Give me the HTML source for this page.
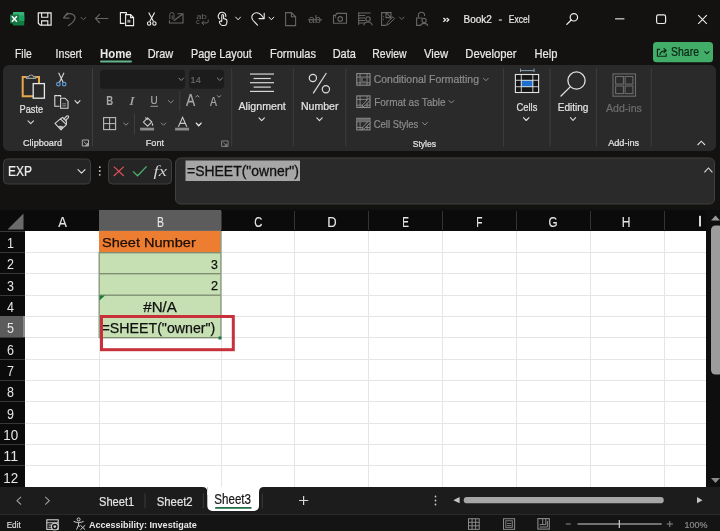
<!DOCTYPE html>
<html><head><meta charset="utf-8">
<style>
*{margin:0;padding:0}
html,body{width:720px;height:531px;overflow:hidden;background:#131210}
svg{display:block;font-family:"Liberation Sans",sans-serif}
svg{will-change:transform}
</style></head><body>
<svg width="720" height="531" viewBox="0 0 720 531">
<rect x="0" y="0" width="720" height="531" fill="#131210" />
<rect x="3" y="65" width="713" height="86" fill="#2a2a2a" rx="6" />
<rect x="3.5" y="159" width="87" height="25" fill="#252525" rx="4" stroke="#3e3e3e" stroke-width="1" />
<rect x="108.5" y="159" width="63" height="25" fill="#252525" rx="4" stroke="#3e3e3e" stroke-width="1" />
<rect x="175.5" y="158" width="539" height="46" fill="#2a2a2a" rx="5" stroke="#404040" stroke-width="1" />
<rect x="0" y="210" width="720" height="21" fill="#0b0b0b" />
<rect x="25" y="231" width="681" height="256" fill="#ffffff" />
<rect x="25" y="252" width="681" height="1" fill="#e5e5e5" />
<rect x="25" y="273" width="681" height="1" fill="#e5e5e5" />
<rect x="25" y="295" width="681" height="1" fill="#e5e5e5" />
<rect x="25" y="316" width="681" height="1" fill="#e5e5e5" />
<rect x="25" y="337" width="681" height="1" fill="#e5e5e5" />
<rect x="25" y="359" width="681" height="1" fill="#e5e5e5" />
<rect x="25" y="380" width="681" height="1" fill="#e5e5e5" />
<rect x="25" y="401" width="681" height="1" fill="#e5e5e5" />
<rect x="25" y="423" width="681" height="1" fill="#e5e5e5" />
<rect x="25" y="444" width="681" height="1" fill="#e5e5e5" />
<rect x="25" y="465" width="681" height="1" fill="#e5e5e5" />
<rect x="99" y="231" width="1" height="256" fill="#e5e5e5" />
<rect x="221" y="231" width="1" height="256" fill="#e5e5e5" />
<rect x="294" y="231" width="1" height="256" fill="#e5e5e5" />
<rect x="368" y="231" width="1" height="256" fill="#e5e5e5" />
<rect x="442" y="231" width="1" height="256" fill="#e5e5e5" />
<rect x="516" y="231" width="1" height="256" fill="#e5e5e5" />
<rect x="590" y="231" width="1" height="256" fill="#e5e5e5" />
<rect x="664" y="231" width="1" height="256" fill="#e5e5e5" />
<rect x="0" y="231" width="25" height="256" fill="#0b0b0b" />
<rect x="706" y="210" width="14" height="277" fill="#0e0e0e" />
<rect x="0" y="487" width="720" height="28" fill="#1c1c1c" />
<rect x="0" y="514" width="720" height="1" fill="#2a2a2a" />
<rect x="0" y="515" width="720" height="16" fill="#141414" />
<text x="15.00" y="57.60" font-size="12.35" textLength="16.71" lengthAdjust="spacingAndGlyphs" fill="#e8e8e8" stroke="#e8e8e8" stroke-width="0.22" >File</text>
<text x="55.60" y="57.60" font-size="12.35" textLength="26.41" lengthAdjust="spacingAndGlyphs" fill="#e8e8e8" stroke="#e8e8e8" stroke-width="0.22" >Insert</text>
<text x="100.00" y="57.60" font-size="12.35" textLength="31.68" lengthAdjust="spacingAndGlyphs" fill="#e8e8e8" font-weight="bold" >Home</text>
<rect x="100" y="60.5" width="32" height="2" fill="#62b58c" rx="1" />
<text x="147.70" y="57.60" font-size="12.35" textLength="25.53" lengthAdjust="spacingAndGlyphs" fill="#e8e8e8" stroke="#e8e8e8" stroke-width="0.22" >Draw</text>
<text x="191.00" y="57.60" font-size="12.35" textLength="60.65" lengthAdjust="spacingAndGlyphs" fill="#e8e8e8" stroke="#e8e8e8" stroke-width="0.22" >Page Layout</text>
<text x="270.00" y="57.60" font-size="12.35" textLength="45.97" lengthAdjust="spacingAndGlyphs" fill="#e8e8e8" stroke="#e8e8e8" stroke-width="0.22" >Formulas</text>
<text x="332.70" y="57.60" font-size="12.35" textLength="23.21" lengthAdjust="spacingAndGlyphs" fill="#e8e8e8" stroke="#e8e8e8" stroke-width="0.22" >Data</text>
<text x="372.30" y="57.60" font-size="12.35" textLength="34.28" lengthAdjust="spacingAndGlyphs" fill="#e8e8e8" stroke="#e8e8e8" stroke-width="0.22" >Review</text>
<text x="424.00" y="57.60" font-size="12.35" textLength="24.18" lengthAdjust="spacingAndGlyphs" fill="#e8e8e8" stroke="#e8e8e8" stroke-width="0.22" >View</text>
<text x="465.30" y="57.60" font-size="12.35" textLength="51.28" lengthAdjust="spacingAndGlyphs" fill="#e8e8e8" stroke="#e8e8e8" stroke-width="0.22" >Developer</text>
<text x="534.50" y="57.60" font-size="12.35" textLength="22.96" lengthAdjust="spacingAndGlyphs" fill="#e8e8e8" stroke="#e8e8e8" stroke-width="0.22" >Help</text>
<rect x="653" y="42.1" width="60" height="20.2" fill="#42ad68" rx="3.5" />
<text x="671.10" y="56.40" font-size="11.92" textLength="27.88" lengthAdjust="spacingAndGlyphs" fill="#0b2614" stroke="#0b2614" stroke-width="0.22" >Share</text>
<path d="M660.2 49.4 H657.4 V56.2 H666.2 V53.4" fill="none" stroke="#0b2614" stroke-width="1.1" />
<path d="M659.8 55 Q660.6 50.8 665.4 50.6 M663.6 48.2 L666.2 50.6 L663.6 53" fill="none" stroke="#0b2614" stroke-width="1.1" />
<path d="M704.80 51.55 L706.90 53.65 L709.00 51.55" fill="none" stroke="#0b2614" stroke-width="1.1" stroke-linecap="round" stroke-linejoin="round"/>
<text x="463.50" y="23.10" font-size="10.90" textLength="28.45" lengthAdjust="spacingAndGlyphs" fill="#e8e8e8" stroke="#e8e8e8" stroke-width="0.22" >Book2</text>
<rect x="498.8" y="19.5" width="3.1" height="1.1" fill="#e8e8e8" />
<text x="508.75" y="23.10" font-size="10.90" textLength="20.81" lengthAdjust="spacingAndGlyphs" fill="#e8e8e8" stroke="#e8e8e8" stroke-width="0.22" >Excel</text>
<text x="19.60" y="112.70" font-size="10.61" textLength="23.47" lengthAdjust="spacingAndGlyphs" fill="#e4e4e4" stroke="#e4e4e4" stroke-width="0.22" >Paste</text>
<text x="23.00" y="145.90" font-size="9.16" textLength="39.00" lengthAdjust="spacingAndGlyphs" fill="#e4e4e4" stroke="#e4e4e4" stroke-width="0.22" >Clipboard</text>
<text x="145.80" y="145.90" font-size="9.45" textLength="18.21" lengthAdjust="spacingAndGlyphs" fill="#e4e4e4" stroke="#e4e4e4" stroke-width="0.22" >Font</text>
<text x="238.50" y="110.00" font-size="11.19" textLength="47.26" lengthAdjust="spacingAndGlyphs" fill="#e4e4e4" stroke="#e4e4e4" stroke-width="0.22" >Alignment</text>
<text x="301.00" y="110.00" font-size="11.19" textLength="37.46" lengthAdjust="spacingAndGlyphs" fill="#e4e4e4" stroke="#e4e4e4" stroke-width="0.22" >Number</text>
<text x="373.75" y="83.30" font-size="11.19" textLength="105.25" lengthAdjust="spacingAndGlyphs" fill="#8c8c8c" stroke="#8c8c8c" stroke-width="0.22" >Conditional Formatting</text>
<text x="374.20" y="105.80" font-size="11.19" textLength="71.41" lengthAdjust="spacingAndGlyphs" fill="#8c8c8c" stroke="#8c8c8c" stroke-width="0.22" >Format as Table</text>
<text x="373.75" y="128.30" font-size="11.48" textLength="44.58" lengthAdjust="spacingAndGlyphs" fill="#8c8c8c" stroke="#8c8c8c" stroke-width="0.22" >Cell Styles</text>
<text x="412.70" y="147.00" font-size="9.88" textLength="23.33" lengthAdjust="spacingAndGlyphs" fill="#e4e4e4" stroke="#e4e4e4" stroke-width="0.22" >Styles</text>
<text x="516.50" y="110.50" font-size="11.63" textLength="20.82" lengthAdjust="spacingAndGlyphs" fill="#e4e4e4" stroke="#e4e4e4" stroke-width="0.22" >Cells</text>
<text x="557.70" y="110.50" font-size="11.63" textLength="30.67" lengthAdjust="spacingAndGlyphs" fill="#e4e4e4" stroke="#e4e4e4" stroke-width="0.22" >Editing</text>
<text x="606.00" y="111.75" font-size="11.56" textLength="35.80" lengthAdjust="spacingAndGlyphs" fill="#6e6e6e" stroke="#6e6e6e" stroke-width="0.22" >Add-ins</text>
<text x="608.20" y="146.30" font-size="9.30" textLength="31.00" lengthAdjust="spacingAndGlyphs" fill="#e4e4e4" stroke="#e4e4e4" stroke-width="0.22" >Add-ins</text>
<text x="8.00" y="176.00" font-size="13.95" textLength="24.01" lengthAdjust="spacingAndGlyphs" fill="#ececec" stroke="#ececec" stroke-width="0.22" >EXP</text>
<rect x="185.5" y="160.5" width="114.5" height="20.5" fill="#a6a6a6" />
<text x="187.00" y="176.20" font-size="14.83" textLength="111.97" lengthAdjust="spacingAndGlyphs" fill="#111111" stroke="#111111" stroke-width="0.3" >=SHEET(&quot;owner&quot;)</text>
<rect x="99" y="211" width="1" height="19" fill="#333333" />
<rect x="221" y="211" width="1" height="19" fill="#333333" />
<rect x="294" y="211" width="1" height="19" fill="#333333" />
<rect x="368" y="211" width="1" height="19" fill="#333333" />
<rect x="442" y="211" width="1" height="19" fill="#333333" />
<rect x="516" y="211" width="1" height="19" fill="#333333" />
<rect x="590" y="211" width="1" height="19" fill="#333333" />
<rect x="664" y="211" width="1" height="19" fill="#333333" />
<rect x="99" y="210" width="122" height="21" fill="#5c5c5c" />
<rect x="99" y="230" width="122" height="1" fill="#6a6a6a" />
<rect x="0" y="231" width="25" height="1" fill="#383838" />
<rect x="0" y="252" width="25" height="1" fill="#383838" />
<rect x="0" y="273" width="25" height="1" fill="#383838" />
<rect x="0" y="295" width="25" height="1" fill="#383838" />
<rect x="0" y="316" width="25" height="1" fill="#383838" />
<rect x="0" y="337" width="25" height="1" fill="#383838" />
<rect x="0" y="359" width="25" height="1" fill="#383838" />
<rect x="0" y="380" width="25" height="1" fill="#383838" />
<rect x="0" y="401" width="25" height="1" fill="#383838" />
<rect x="0" y="423" width="25" height="1" fill="#383838" />
<rect x="0" y="444" width="25" height="1" fill="#383838" />
<rect x="0" y="465" width="25" height="1" fill="#383838" />
<rect x="0" y="316" width="25" height="21" fill="#5c5c5c" />
<rect x="23" y="316" width="2" height="21" fill="#8a8a8a" />
<path d="M7.5 229.5 L23.5 229.5 L23.5 213.5 Z" fill="#6a6a6a" stroke="none" stroke-width="1" />
<text x="58.30" y="226.50" font-size="14.53" textLength="8.66" lengthAdjust="spacingAndGlyphs" fill="#e6e6e6" stroke="#e6e6e6" stroke-width="0.1" >A</text>
<text x="157.00" y="226.50" font-size="14.53" textLength="6.97" lengthAdjust="spacingAndGlyphs" fill="#e6e6e6" stroke="#e6e6e6" stroke-width="0.1" >B</text>
<text x="254.30" y="226.50" font-size="14.53" textLength="8.02" lengthAdjust="spacingAndGlyphs" fill="#e6e6e6" stroke="#e6e6e6" stroke-width="0.1" >C</text>
<text x="327.30" y="226.50" font-size="14.53" textLength="9.43" lengthAdjust="spacingAndGlyphs" fill="#e6e6e6" stroke="#e6e6e6" stroke-width="0.1" >D</text>
<text x="402.30" y="226.50" font-size="14.53" textLength="6.67" lengthAdjust="spacingAndGlyphs" fill="#e6e6e6" stroke="#e6e6e6" stroke-width="0.1" >E</text>
<text x="476.20" y="226.50" font-size="14.53" textLength="6.21" lengthAdjust="spacingAndGlyphs" fill="#e6e6e6" stroke="#e6e6e6" stroke-width="0.1" >F</text>
<text x="548.40" y="226.50" font-size="14.53" textLength="9.07" lengthAdjust="spacingAndGlyphs" fill="#e6e6e6" stroke="#e6e6e6" stroke-width="0.1" >G</text>
<text x="621.70" y="226.50" font-size="14.53" textLength="8.73" lengthAdjust="spacingAndGlyphs" fill="#e6e6e6" stroke="#e6e6e6" stroke-width="0.1" >H</text>
<rect x="699" y="215.8" width="2" height="10.7" fill="#d8d8d8" />
<text x="7.10" y="247.87" font-size="14.95" textLength="6.95" lengthAdjust="spacingAndGlyphs" fill="#e6e6e6" >1</text>
<text x="7.10" y="269.20" font-size="14.95" textLength="6.95" lengthAdjust="spacingAndGlyphs" fill="#e6e6e6" >2</text>
<text x="7.10" y="290.53" font-size="14.95" textLength="6.95" lengthAdjust="spacingAndGlyphs" fill="#e6e6e6" >3</text>
<text x="7.10" y="311.87" font-size="14.95" textLength="6.95" lengthAdjust="spacingAndGlyphs" fill="#e6e6e6" >4</text>
<text x="7.10" y="333.20" font-size="14.95" textLength="6.95" lengthAdjust="spacingAndGlyphs" fill="#e6e6e6" >5</text>
<text x="7.10" y="354.53" font-size="14.95" textLength="6.95" lengthAdjust="spacingAndGlyphs" fill="#e6e6e6" >6</text>
<text x="7.10" y="375.87" font-size="14.95" textLength="6.95" lengthAdjust="spacingAndGlyphs" fill="#e6e6e6" >7</text>
<text x="7.10" y="397.20" font-size="14.95" textLength="6.95" lengthAdjust="spacingAndGlyphs" fill="#e6e6e6" >8</text>
<text x="7.10" y="418.53" font-size="14.95" textLength="6.95" lengthAdjust="spacingAndGlyphs" fill="#e6e6e6" >9</text>
<text x="3.30" y="439.87" font-size="14.95" textLength="14.93" lengthAdjust="spacingAndGlyphs" fill="#e6e6e6" >10</text>
<text x="3.30" y="461.20" font-size="14.95" textLength="14.87" lengthAdjust="spacingAndGlyphs" fill="#e6e6e6" >11</text>
<text x="3.30" y="482.53" font-size="14.95" textLength="14.93" lengthAdjust="spacingAndGlyphs" fill="#e6e6e6" >12</text>
<rect x="99" y="231" width="122" height="21" fill="#ed7d31" />
<rect x="99" y="252" width="122" height="86" fill="#c6e0b4" />
<rect x="99" y="252" width="122" height="1.4" fill="#7f8f74" />
<rect x="99" y="273" width="122" height="1.4" fill="#7f8f74" />
<rect x="99" y="294.5" width="122" height="1.4" fill="#7f8f74" />
<rect x="99" y="316" width="122" height="1.4" fill="#7f8f74" />
<rect x="99" y="337" width="122" height="1.4" fill="#7f8f74" />
<rect x="98.5" y="252" width="1.4" height="86" fill="#8a9a80" />
<rect x="220.2" y="231" width="1.4" height="107" fill="#8e9c84" />
<text x="102.00" y="246.90" font-size="13.66" textLength="93.76" lengthAdjust="spacingAndGlyphs" fill="#1c0f06" stroke="#1c0f06" stroke-width="0.25" >Sheet Number</text>
<text x="210.90" y="268.90" font-size="13.40" textLength="6.85" lengthAdjust="spacingAndGlyphs" fill="#111" stroke="#111" stroke-width="0.25" >3</text>
<text x="210.90" y="290.00" font-size="13.26" textLength="7.05" lengthAdjust="spacingAndGlyphs" fill="#111" stroke="#111" stroke-width="0.25" >2</text>
<text x="143.30" y="311.50" font-size="14.53" textLength="33.60" lengthAdjust="spacingAndGlyphs" fill="#111" stroke="#111" stroke-width="0.25" >#N/A</text>
<text x="101.50" y="332.80" font-size="13.81" textLength="113.86" lengthAdjust="spacingAndGlyphs" fill="#111" stroke="#111" stroke-width="0.25" >=SHEET(&quot;owner&quot;)</text>
<path d="M99.5 295.5 L105 295.5 L99.5 300.5 Z" fill="#1f7a3c" stroke="none" stroke-width="1" />
<rect x="218.5" y="336.5" width="3" height="3" fill="#217346" />
<rect x="101.5" y="316.5" width="131.8" height="33.2" fill="none" stroke="#c8303a" stroke-width="3" />
<path d="M711 220.5 L715.5 215.5 L720 220.5 Z" fill="#9a9a9a" stroke="none" stroke-width="1" />
<rect x="711" y="225.5" width="12" height="149" fill="#9c9c9c" rx="4.5" />
<path d="M711 478 L715.5 483 L720 478 Z" fill="#8a8a8a" stroke="none" stroke-width="1" />
<path d="M21.1 496.8 L17 500.7 L21.1 504.6" fill="none" stroke="#a0a0a0" stroke-width="1.1" />
<path d="M45.2 496.8 L49.3 500.7 L45.2 504.6" fill="none" stroke="#a0a0a0" stroke-width="1.1" />
<text x="99.00" y="506.00" font-size="13.52" textLength="35.29" lengthAdjust="spacingAndGlyphs" fill="#e4e4e4" stroke="#e4e4e4" stroke-width="0.22" >Sheet1</text>
<text x="156.70" y="506.00" font-size="13.52" textLength="35.99" lengthAdjust="spacingAndGlyphs" fill="#e4e4e4" stroke="#e4e4e4" stroke-width="0.22" >Sheet2</text>
<rect x="144.5" y="493.3" width="1" height="15" fill="#3a3a3a" />
<rect x="202.8" y="493.3" width="1" height="15" fill="#3a3a3a" />
<rect x="261.8" y="493.3" width="1" height="15" fill="#3a3a3a" />
<rect x="207.3" y="487" width="51.7" height="24" fill="#ffffff" rx="5" />
<rect x="207.3" y="487" width="51.7" height="8" fill="#ffffff" />
<path d="M202.3 487 H207.3 V492 Q207.3 487 202.3 487 Z" fill="#ffffff" stroke="none" stroke-width="1" />
<path d="M264 487 H259 V492 Q259 487 264 487 Z" fill="#ffffff" stroke="none" stroke-width="1" />
<text x="214.30" y="504.00" font-size="14.10" textLength="36.69" lengthAdjust="spacingAndGlyphs" fill="#161616" stroke="#161616" stroke-width="0.22" >Sheet3</text>
<rect x="215" y="507" width="36.7" height="1.8" fill="#1f6e43" rx="0.9" />
<path d="M303.6 496 V505 M299 500.5 H308.3" fill="none" stroke="#d8d8d8" stroke-width="1.2" />
<rect x="434.6" y="495.6" width="1.8" height="1.8" fill="#c8c8c8" rx="0.9" />
<rect x="434.6" y="499.6" width="1.8" height="1.8" fill="#c8c8c8" rx="0.9" />
<rect x="434.6" y="503.6" width="1.8" height="1.8" fill="#c8c8c8" rx="0.9" />
<path d="M459.6 497 L453.3 500.2 L459.6 503.3 Z" fill="#c4c4c4" stroke="none" stroke-width="1" />
<rect x="463.75" y="497" width="200" height="6.3" fill="#a6a6a6" rx="3.15" />
<path d="M697 497 L702.5 500.2 L697 503.3 Z" fill="#c4c4c4" stroke="none" stroke-width="1" />
<text x="6.70" y="528.00" font-size="9.74" textLength="14.04" lengthAdjust="spacingAndGlyphs" fill="#d8d8d8" stroke="#d8d8d8" stroke-width="0.22" >Edit</text>
<text x="89.00" y="527.70" font-size="9.74" textLength="107.68" lengthAdjust="spacingAndGlyphs" fill="#e8e8e8" font-weight="bold" >Accessibility: Investigate</text>
<text x="684.60" y="527.50" font-size="9.45" textLength="22.88" lengthAdjust="spacingAndGlyphs" fill="#8a8a8a" stroke="#8a8a8a" stroke-width="0.22" >100%</text>
<rect x="577.5" y="523.5" width="84.2" height="1" fill="#d0d0d0" />
<rect x="618.7" y="520" width="1.2" height="8" fill="#d0d0d0" />
<rect x="565.8" y="523.5" width="5" height="1" fill="#8a8a8a" />
<path d="M669.8 521 V527 M666.7 524 H672.9" fill="none" stroke="#8a8a8a" stroke-width="1" />
<rect x="12.9" y="11.9" width="11.4" height="4.6" fill="#35b577" rx="1" />
<rect x="12.9" y="15.5" width="11.4" height="5.5" fill="#21a366" />
<rect x="12.9" y="20.5" width="11.4" height="5.1" fill="#107c41" rx="1" />
<rect x="12.9" y="16.2" width="11.4" height="4.6" fill="#21a366" />
<rect x="10" y="14.6" width="9.1" height="8.8" fill="#1a7543" rx="1" />
<path d="M11.9 16.3 L16.9 21.7 M16.9 16.3 L11.9 21.7" fill="none" stroke="#ffffff" stroke-width="1.5" />
<path d="M38.3 12.8 H51.1 V25.2 H40.3 L38.3 23.2 Z" fill="none" stroke="#ececec" stroke-width="1.2" />
<path d="M41.6 12.8 V17.2 H47.8 V12.8" fill="none" stroke="#ececec" stroke-width="1.1" />
<path d="M41.6 25.2 V20.9 H47.8 V25.2" fill="none" stroke="#ececec" stroke-width="1.1" />
<path d="M63.5 17.8 L67.3 13 M63.5 17.8 L69 18.2 M63.8 17.6 C66 14.2 69.5 12.8 72.5 14.2 C76.5 16.3 76 21 68.5 25.6" fill="none" stroke="#666666" stroke-width="1.2" stroke-linecap="round"/>
<path d="M81.00 17.35 L83.40 19.75 L85.80 17.35" fill="none" stroke="#666666" stroke-width="1" stroke-linecap="round" stroke-linejoin="round"/>
<path d="M95.5 18.5 H108.3 M99.8 14.1 L95.5 18.5 L99.8 23" fill="none" stroke="#666666" stroke-width="1.1" />
<path d="M124.6 23.4 H120.4 V12.6 H126.4 V14.4" fill="none" stroke="#ececec" stroke-width="1.1" />
<path d="M125.6 14.6 H130.6 L133.6 17.6 V25.6 H125.6 Z M130.6 14.6 V17.6 H133.6" fill="none" stroke="#ececec" stroke-width="1.1" />
<rect x="127.4" y="19.8" width="3" height="2.8" fill="#a0a0a0" />
<path d="M148.7 12.5 L153.5 21.6 M154.6 12.5 L149.8 21.6" fill="none" stroke="#ececec" stroke-width="1.1" />
<circle cx="149.1" cy="23.5" r="1.7" fill="none" stroke="#ececec" stroke-width="1.1"/>
<circle cx="154.4" cy="23.5" r="1.7" fill="none" stroke="#ececec" stroke-width="1.1"/>
<path d="M169.8 19.2 V14.6 A2.1 2.1 0 0 1 174 14.6 V18.4 A0.9 0.9 0 0 1 172.2 18.4 V15.4" fill="none" stroke="#666666" stroke-width="0.9" />
<path d="M169.4 20.3 V23 H183 V13.8 H177.5 M183 13.8 L173.8 20.8" fill="none" stroke="#666666" stroke-width="1.1" />
<text x="196.2" y="18.6" font-size="7.5" fill="#666666" textLength="10.6" lengthAdjust="spacingAndGlyphs">ab</text>
<text x="196" y="24.3" font-size="7.5" fill="#666666">c</text>
<path d="M208.2 19.6 V21.6 Q208.2 22.9 206.8 22.9 H201.8 M203.9 20.9 L201.8 22.9 L203.9 24.9" fill="none" stroke="#666666" stroke-width="1" />
<path d="M219.9 19.2 A3.75 3.75 0 1 1 225.7 16.8" fill="none" stroke="#ececec" stroke-width="1.1" />
<path d="M221.8 21.2 V15.6 Q221.8 14.5 222.7 14.5 Q223.6 14.5 223.6 15.6 V18.6 L225.6 19.1 Q227.2 19.5 227 21.2 L226.7 23.4 Q226.3 25.5 224.3 25.5 H222.6 Q221.3 25.5 220.5 24.3 L219.5 22.7 Q219.1 21.7 219.9 21.3 Q220.8 20.9 221.8 21.8" fill="none" stroke="#ececec" stroke-width="1.1" />
<path d="M235.70 17.15 L238.10 19.75 L240.50 17.15" fill="none" stroke="#ececec" stroke-width="1" stroke-linecap="round" stroke-linejoin="round"/>
<path d="M257.5 25.2 L253.2 20.5 Q250.8 17.6 252.6 14.8 Q255 11.8 258.8 13.2 Q261.5 14.3 263.8 18.2" fill="none" stroke="#ececec" stroke-width="1.1" stroke-linecap="round"/>
<path d="M264.2 13.4 V18.6 H259" fill="none" stroke="#ececec" stroke-width="1.1" stroke-linecap="round" stroke-linejoin="round"/>
<path d="M269.00 17.15 L271.40 19.75 L273.80 17.15" fill="none" stroke="#ececec" stroke-width="1" stroke-linecap="round" stroke-linejoin="round"/>
<path d="M285.6 12.6 H291.4 L295.6 16.8 V25.6 H285.6 Z M291.4 12.6 V16.8 H295.6" fill="none" stroke="#666666" stroke-width="1.1" />
<text x="308.6" y="23" font-size="10.5" fill="#666666" textLength="12.4" lengthAdjust="spacingAndGlyphs">ab</text>
<rect x="307.9" y="19.3" width="14.2" height="1" fill="#666666" />
<path d="M333.5 15.4 H335.5 L336.8 13.4 H346.5 V23.2 H333.5 Z" fill="none" stroke="#666666" stroke-width="1.1" />
<circle cx="340.2" cy="18.9" r="2.3" fill="none" stroke="#666666" stroke-width="1.1"/>
<rect x="334.8" y="16.4" width="1.2" height="1.2" fill="#666666" />
<rect x="358.2" y="12.5" width="12.5" height="1" fill="#666666" />
<rect x="358.2" y="15.0" width="7" height="1" fill="#666666" />
<rect x="358.2" y="17.5" width="7" height="1" fill="#666666" />
<rect x="358.2" y="20.0" width="7" height="1" fill="#666666" />
<rect x="358.2" y="22.5" width="7" height="1" fill="#666666" />
<rect x="358.2" y="12.5" width="1" height="12.5" fill="#666666" />
<circle cx="368" cy="19" r="2.2" fill="#131210" stroke="#666666" stroke-width="1.1"/>
<path d="M363.8 25.4 Q364.4 22 368 22 Q371.6 22 372.2 25.4" fill="#131210" stroke="#666666" stroke-width="1.1" />
<path d="M391 20.8 V12.6 H386 L391 17.6 M386 12.6 V17.6 H391 M386 12.6 H381.6 V25.4 H386" fill="none" stroke="#666666" stroke-width="1.1" />
<path d="M386.6 25.2 L387.4 22.4 L393 16.8 L394.6 18.4 L389 24 Z" fill="#131210" stroke="#666666" stroke-width="1" />
<path d="M382.8 16 L384 17.2 M382.8 19 L384 20.2" fill="none" stroke="#666666" stroke-width="0.9" />
<path d="M399.50 17.05 L401.80 19.45 L404.10 17.05" fill="none" stroke="#666666" stroke-width="1" stroke-linecap="round" stroke-linejoin="round"/>
<path d="M418.4 17.6 V15.4 A3.1 3.1 0 0 1 424.6 15.4 V16" fill="none" stroke="#666666" stroke-width="1.1" />
<path d="M420 25.4 H416.6 V18 H422.4" fill="none" stroke="#666666" stroke-width="1.1" />
<circle cx="424.1" cy="20.4" r="2.1" fill="#131210" stroke="#666666" stroke-width="1.1"/>
<path d="M420.4 25.8 Q421 23.4 424.1 23.4 Q427.2 23.4 427.8 25.8" fill="none" stroke="#666666" stroke-width="1.1" />
<path d="M443.4 17.9 L445.6 19.8 L443.4 21.7 M446.6 17.9 L448.8 19.8 L446.6 21.7" fill="none" stroke="#ececec" stroke-width="1.3" stroke-linejoin="round"/>
<circle cx="573.9" cy="17.3" r="3.7" fill="none" stroke="#ececec" stroke-width="1.2"/>
<path d="M571.2 20 L566.8 24.4" fill="none" stroke="#ececec" stroke-width="1.3" stroke-linecap="round"/>
<rect x="615.1" y="18.3" width="9.3" height="1.1" fill="#ececec" />
<rect x="656.6" y="14.9" width="9" height="8.6" fill="none" rx="1.8" stroke="#ececec" stroke-width="1.2" />
<path d="M698.2 15.2 L706.8 23.8 M706.8 15.2 L698.2 23.8" fill="none" stroke="#ececec" stroke-width="1.1" />
<path d="M22.7 76.9 H39 V96.2 H22.7 Z" fill="none" stroke="#e5a94c" stroke-width="2" />
<path d="M26.5 78.3 V76.6 H28.7 A2.6 2.6 0 0 1 33.5 76.6 H35.6 V78.3 Z" fill="#2a2a2a" stroke="#a0a0a0" stroke-width="1.2" />
<rect x="33.2" y="83.6" width="11.2" height="14.6" fill="#2a2a2a" stroke="#e8e8e8" stroke-width="1.3" />
<path d="M58.6 72.8 L63.2 82.4 M64 72.8 L59.4 82.4" fill="none" stroke="#d8d8d8" stroke-width="1.1" />
<circle cx="58.4" cy="84.2" r="1.75" fill="none" stroke="#5b9bd5" stroke-width="1.2"/>
<circle cx="64.2" cy="84.2" r="1.75" fill="none" stroke="#5b9bd5" stroke-width="1.2"/>
<path d="M59.6 106.2 H54.8 V95.6 H60.6 V97" fill="none" stroke="#d8d8d8" stroke-width="1.1" />
<path d="M60.6 98.2 H65 L68 101.2 V108.2 H60.6 Z" fill="none" stroke="#d8d8d8" stroke-width="1.1" />
<rect x="62.3" y="103.4" width="3.8" height="0.9" fill="#9a9a9a" />
<rect x="62.3" y="105.4" width="3.8" height="0.9" fill="#9a9a9a" />
<path d="M75.00 100.55 L77.50 103.45 L80.00 100.55" fill="none" stroke="#d8d8d8" stroke-width="1.1" stroke-linecap="round" stroke-linejoin="round"/>
<path d="M55 123.4 L60.4 118.8 L66.4 124.6 L61 129.8 Z" fill="none" stroke="#d4d4d4" stroke-width="1.1" stroke-linejoin="round"/>
<path d="M57.6 126.2 L61 129.8 L64 126.8 Q60.5 125 57.6 126.2 Z" fill="#bdbdbd" stroke="none" stroke-width="1" />
<path d="M60.4 118.8 L62.8 117.4 L66.4 121 L66.4 124.6" fill="none" stroke="#d4d4d4" stroke-width="1.1" />
<path d="M63.4 119.4 L66.8 116 Q67.8 115.4 68.4 116.2 Q69 117 68.4 117.6 L65 121" fill="none" stroke="#d4d4d4" stroke-width="1.1" />
<path d="M28.00 120.85 L30.75 123.55 L33.50 120.85" fill="none" stroke="#d8d8d8" stroke-width="1.1" stroke-linecap="round" stroke-linejoin="round"/>
<path d="M82.3 146 V140 H88.5 V146 Z" fill="none" stroke="#b8b8b8" stroke-width="0.9" />
<path d="M84 141.8 L87.6 145.4 M87.6 143 V145.4 H85.2" fill="none" stroke="#b8b8b8" stroke-width="0.9" />
<rect x="92.0" y="68.5" width="1" height="78.0" fill="#3e3e3e" />
<rect x="231.2" y="68.5" width="1" height="78.0" fill="#3e3e3e" />
<rect x="292.8" y="68.5" width="1" height="78.0" fill="#3e3e3e" />
<rect x="345.3" y="68.5" width="1" height="78.0" fill="#3e3e3e" />
<rect x="502.9" y="68.5" width="1" height="78.0" fill="#3e3e3e" />
<rect x="549.5" y="68.5" width="1" height="78.0" fill="#3e3e3e" />
<rect x="595.9" y="68.5" width="1" height="78.0" fill="#3e3e3e" />
<rect x="650.8" y="68.5" width="1" height="78.0" fill="#3e3e3e" />
<rect x="100.1" y="69.7" width="84.9" height="19" fill="#1c1c1c" rx="3.5" />
<path d="M178.90 78.10 L181.20 80.50 L183.50 78.10" fill="none" stroke="#8a8a8a" stroke-width="1" stroke-linecap="round" stroke-linejoin="round"/>
<rect x="189.1" y="69.7" width="35" height="19" fill="#1c1c1c" rx="3.5" />
<path d="M217.40 78.10 L219.85 80.50 L222.30 78.10" fill="none" stroke="#8a8a8a" stroke-width="1" stroke-linecap="round" stroke-linejoin="round"/>
<text x="190.60" y="83.30" font-size="9.94" textLength="10.22" lengthAdjust="spacingAndGlyphs" fill="#6a6a6a" stroke="#6a6a6a" stroke-width="0.22" >14</text>
<text x="106.20" y="105.10" font-size="12.65" textLength="6.92" lengthAdjust="spacingAndGlyphs" fill="#a8a8a8" font-weight="bold" >B</text>
<text x="129" y="105.1" font-size="12.8" font-family="Liberation Serif" font-style="italic" fill="#a8a8a8" textLength="5.6" lengthAdjust="spacingAndGlyphs">I</text>
<text x="150.60" y="104.40" font-size="11.63" textLength="7.22" lengthAdjust="spacingAndGlyphs" fill="#a8a8a8" stroke="#a8a8a8" stroke-width="0.22" >U</text>
<rect x="150.4" y="105.8" width="7.6" height="0.9" fill="#a8a8a8" />
<path d="M168.30 100.50 L170.80 102.90 L173.30 100.50" fill="none" stroke="#8a8a8a" stroke-width="1" stroke-linecap="round" stroke-linejoin="round"/>
<rect x="179.3" y="91.1" width="1" height="20" fill="#3e3e3e" />
<text x="186.00" y="106.00" font-size="16.13" textLength="9.21" lengthAdjust="spacingAndGlyphs" fill="#a8a8a8" stroke="#a8a8a8" stroke-width="0.22" >A</text>
<path d="M195.6 97.2 L197.4 95.3 L199.2 97.2" fill="none" stroke="#a8a8a8" stroke-width="0.9" />
<text x="210.00" y="106.00" font-size="12.06" textLength="6.97" lengthAdjust="spacingAndGlyphs" fill="#a8a8a8" stroke="#a8a8a8" stroke-width="0.22" >A</text>
<path d="M217.2 95.4 L219 97.3 L220.8 95.4" fill="none" stroke="#a8a8a8" stroke-width="0.9" />
<rect x="103.6" y="117.6" width="12" height="12" fill="none" stroke="#bdbdbd" stroke-width="1.1" />
<rect x="109.1" y="117.6" width="1" height="12" fill="#bdbdbd" />
<rect x="103.6" y="123.1" width="12" height="1" fill="#bdbdbd" />
<path d="M123.75 122.95 L125.95 125.25 L128.15 122.95" fill="none" stroke="#8a8a8a" stroke-width="1" stroke-linecap="round" stroke-linejoin="round"/>
<rect x="134" y="113.7" width="1" height="20.5" fill="#3e3e3e" />
<path d="M143.4 122.2 L147.6 117.8 L151.8 122 L147.6 126.2 Z" fill="none" stroke="#c8c8c8" stroke-width="1.1" stroke-linejoin="round"/>
<path d="M145.4 117.4 L147.6 119.8" fill="none" stroke="#c8c8c8" stroke-width="1.1" />
<path d="M152.4 122.6 Q154 125 152.6 126 Q151.2 125 152.4 122.6 Z" fill="#c8c8c8" stroke="none" stroke-width="1" />
<rect x="140.1" y="127.7" width="14" height="2.8" fill="#8c8c8c" />
<path d="M161.20 122.95 L163.50 125.25 L165.80 122.95" fill="none" stroke="#8a8a8a" stroke-width="1" stroke-linecap="round" stroke-linejoin="round"/>
<path d="M178.4 126.8 L182.6 117.3 L186.8 126.8 M180 123.4 H185.2" fill="none" stroke="#c8c8c8" stroke-width="1.1" />
<rect x="175.1" y="127.7" width="14" height="2.8" fill="#8c8c8c" />
<path d="M196.30 123.10 L198.70 125.70 L201.10 123.10" fill="none" stroke="#f0f0f0" stroke-width="1.3" stroke-linecap="round" stroke-linejoin="round"/>
<path d="M221.6 146.4 V140.9 H228.1 V146.4 Z" fill="none" stroke="#8a8a8a" stroke-width="0.9" />
<path d="M223.2 142.4 L226.8 146 M226.8 143.6 V146 H224.4" fill="none" stroke="#8a8a8a" stroke-width="0.9" />
<rect x="250" y="73.45" width="24" height="1.2" fill="#d8d8d8" />
<rect x="253.6" y="77.9" width="17.200000000000017" height="1.2" fill="#d8d8d8" />
<rect x="250" y="82.10000000000001" width="24" height="1.2" fill="#d8d8d8" />
<rect x="253.6" y="86.5" width="17.200000000000017" height="1.2" fill="#d8d8d8" />
<rect x="250" y="90.80000000000001" width="24" height="1.2" fill="#d8d8d8" />
<path d="M259.00 117.80 L261.70 120.60 L264.40 117.80" fill="none" stroke="#e0e0e0" stroke-width="1.1" stroke-linecap="round" stroke-linejoin="round"/>
<circle cx="312.9" cy="78" r="3.6" fill="none" stroke="#dcdcdc" stroke-width="1.2"/>
<circle cx="325.9" cy="89.2" r="3.6" fill="none" stroke="#dcdcdc" stroke-width="1.2"/>
<path d="M326.4 73 L313.2 93.4" fill="none" stroke="#dcdcdc" stroke-width="1.2" />
<path d="M316.80 117.80 L319.50 120.60 L322.20 117.80" fill="none" stroke="#e0e0e0" stroke-width="1.1" stroke-linecap="round" stroke-linejoin="round"/>
<rect x="356.8" y="73.6" width="13.2" height="11.6" fill="none" stroke="#8c8c8c" stroke-width="1.1" />
<rect x="359.6" y="73.6" width="0.9" height="11.6" fill="#8c8c8c" />
<rect x="366.6" y="73.6" width="0.9" height="11.6" fill="#8c8c8c" />
<rect x="356.8" y="76.6" width="13.2" height="0.9" fill="#8c8c8c" />
<rect x="356.8" y="82.4" width="13.2" height="0.9" fill="#8c8c8c" />
<rect x="360.5" y="76.6" width="6" height="5.8" fill="#5a5a5a" />
<rect x="363" y="78.6" width="3" height="2.2" fill="#1e1e1e" />
<rect x="356.8" y="95.89999999999999" width="13.2" height="11.6" fill="none" stroke="#8c8c8c" stroke-width="1.1" />
<rect x="359.6" y="95.89999999999999" width="0.9" height="11.6" fill="#8c8c8c" />
<rect x="366.6" y="95.89999999999999" width="0.9" height="11.6" fill="#8c8c8c" />
<rect x="356.8" y="98.89999999999999" width="13.2" height="0.9" fill="#8c8c8c" />
<rect x="356.8" y="104.7" width="13.2" height="0.9" fill="#8c8c8c" />
<path d="M361.6 107.4 L363 104.4 L368.6 98.6 L370.2 100.2 L364.6 106 Z" fill="#2a2a2a" stroke="#8c8c8c" stroke-width="1" />
<rect x="356.8" y="118.3" width="13.2" height="11.6" fill="none" stroke="#8c8c8c" stroke-width="1.1" />
<rect x="359.6" y="118.3" width="0.9" height="11.6" fill="#8c8c8c" />
<rect x="366.6" y="118.3" width="0.9" height="11.6" fill="#8c8c8c" />
<rect x="356.8" y="121.3" width="13.2" height="0.9" fill="#8c8c8c" />
<rect x="356.8" y="127.10000000000001" width="13.2" height="0.9" fill="#8c8c8c" />
<rect x="357.3" y="118.8" width="12.2" height="3" fill="#6a6a6a" />
<path d="M361.6 129.8 L363 126.8 L368.6 121 L370.2 122.6 L364.6 128.4 Z" fill="#2a2a2a" stroke="#8c8c8c" stroke-width="1" />
<path d="M483.50 78.25 L485.90 80.75 L488.30 78.25" fill="none" stroke="#8c8c8c" stroke-width="1" stroke-linecap="round" stroke-linejoin="round"/>
<path d="M449.00 100.60 L451.40 103.00 L453.80 100.60" fill="none" stroke="#8c8c8c" stroke-width="1" stroke-linecap="round" stroke-linejoin="round"/>
<path d="M422.50 122.55 L424.90 125.05 L427.30 122.55" fill="none" stroke="#8c8c8c" stroke-width="1" stroke-linecap="round" stroke-linejoin="round"/>
<rect x="520.4" y="70.2" width="13.6" height="0.9" fill="#8fb0c8" />
<rect x="520" y="68.6" width="0.9" height="3.4" fill="#8fb0c8" />
<rect x="533.6" y="68.6" width="0.9" height="3.4" fill="#8fb0c8" />
<rect x="515.4" y="74.5" width="23.2" height="18" fill="#151515" />
<rect x="521.3" y="80.4" width="11.4" height="6.2" fill="#1f6fcf" stroke="#6aaef0" stroke-width="0.8" />
<rect x="515.4" y="74.5" width="23.2" height="18" fill="none" stroke="#e2e2e2" stroke-width="1.1" />
<rect x="520.8" y="74.5" width="0.9" height="18" fill="#dcdcdc" />
<rect x="532.4" y="74.5" width="0.9" height="18" fill="#dcdcdc" />
<rect x="515.4" y="79.8" width="23.2" height="0.9" fill="#dcdcdc" />
<rect x="515.4" y="86.3" width="23.2" height="0.9" fill="#dcdcdc" />
<path d="M523.50 117.70 L526.25 120.50 L529.00 117.70" fill="none" stroke="#e0e0e0" stroke-width="1.1" stroke-linecap="round" stroke-linejoin="round"/>
<circle cx="576.5" cy="80.55" r="8.6" fill="none" stroke="#e0e0e0" stroke-width="1.3"/>
<path d="M570.2 86.9 L561 96" fill="none" stroke="#e0e0e0" stroke-width="1.3" stroke-linecap="round"/>
<path d="M570.50 117.70 L573.05 120.50 L575.60 117.70" fill="none" stroke="#e0e0e0" stroke-width="1.1" stroke-linecap="round" stroke-linejoin="round"/>
<rect x="613" y="73.9" width="22.5" height="22.3" fill="none" stroke="#6c6c6c" stroke-width="1.1" />
<rect x="615.6" y="76.5" width="7.8" height="7.6" fill="none" stroke="#6c6c6c" stroke-width="1.1" />
<rect x="625.1" y="76.5" width="7.8" height="7.6" fill="none" stroke="#6c6c6c" stroke-width="1.1" />
<rect x="615.6" y="86" width="7.8" height="7.6" fill="none" stroke="#6c6c6c" stroke-width="1.1" />
<rect x="625.1" y="86" width="7.8" height="7.6" fill="none" stroke="#6c6c6c" stroke-width="1.1" />
<path d="M697.6 145 L701.3 141.2 L705 145" fill="none" stroke="#dcdcdc" stroke-width="1.1" />
<path d="M78.00 169.60 L81.50 173.20 L85.00 169.60" fill="none" stroke="#dcdcdc" stroke-width="1.2" stroke-linecap="round" stroke-linejoin="round"/>
<rect x="98.9" y="166.29999999999998" width="1.8" height="1.8" fill="#d0d0d0" rx="0.9" />
<rect x="98.9" y="170.1" width="1.8" height="1.8" fill="#d0d0d0" rx="0.9" />
<rect x="98.9" y="173.9" width="1.8" height="1.8" fill="#d0d0d0" rx="0.9" />
<path d="M113.8 166.6 L123.8 176 M123.8 166.6 L113.8 176" fill="none" stroke="#e0505a" stroke-width="1.2" />
<path d="M133 171.4 L137.6 175.8 L146.6 166.4" fill="none" stroke="#4cb36e" stroke-width="1.3" />
<text x="153.6" y="175.6" font-size="14" font-family="Liberation Serif" font-style="italic" fill="#d0d0d0" textLength="13.4" lengthAdjust="spacingAndGlyphs">fx</text>
<path d="M704.4 172.4 L708.4 168 L712.4 172.4" fill="none" stroke="#dcdcdc" stroke-width="1.1" />
<rect x="46.8" y="519.8" width="11.4" height="9.6" fill="none" stroke="#cfcfcf" stroke-width="1.1" />
<rect x="46.8" y="522.3" width="11.4" height="0.9" fill="#cfcfcf" />
<rect x="48.5" y="524.6" width="3" height="0.9" fill="#cfcfcf" />
<rect x="48.5" y="526.8" width="2.4" height="0.9" fill="#cfcfcf" />
<circle cx="54.8" cy="526.6" r="3.4" fill="#141414" stroke="#cfcfcf" stroke-width="1.1"/>
<circle cx="54.8" cy="526.6" r="1.3" fill="#cfcfcf"/>
<circle cx="78.6" cy="519.4" r="1.5" fill="none" stroke="#cfcfcf" stroke-width="1"/>
<path d="M73.6 521.4 Q76 522.6 78.6 522.4 Q81.2 522.6 83.6 521.4 M78.6 522.4 V525 L76.6 529.6 M78.6 525 L79.4 527" fill="none" stroke="#cfcfcf" stroke-width="1" />
<path d="M80.4 525.2 L85.2 529.8 M85.2 525.2 L80.4 529.8" fill="none" stroke="#cfcfcf" stroke-width="1" />
<rect x="468.5" y="518.75" width="10.7" height="10.6" fill="none" stroke="#8a8a8a" stroke-width="1" />
<rect x="471.57" y="518.75" width="1" height="10.6" fill="#8a8a8a" />
<rect x="468.5" y="521.78" width="10.7" height="1" fill="#8a8a8a" />
<rect x="475.14" y="518.75" width="1" height="10.6" fill="#8a8a8a" />
<rect x="468.5" y="525.31" width="10.7" height="1" fill="#8a8a8a" />
<rect x="503.5" y="518.75" width="11.1" height="10.6" fill="none" stroke="#8a8a8a" stroke-width="1" />
<rect x="505.8" y="520.8" width="6.5" height="6.5" fill="none" stroke="#8a8a8a" stroke-width="0.9" />
<rect x="507" y="523" width="4.2" height="0.8" fill="#8a8a8a" />
<rect x="507" y="525" width="4.2" height="0.8" fill="#8a8a8a" />
<rect x="537.9" y="518.6" width="11.4" height="10.5" fill="none" stroke="#8a8a8a" stroke-width="1.1" />
<path d="M539.6 524.6 H545.8 V519 M542.7 519 V524.6 M539.6 527 H547.4 V521" fill="none" stroke="#8a8a8a" stroke-width="1" />
</svg>
</body></html>
